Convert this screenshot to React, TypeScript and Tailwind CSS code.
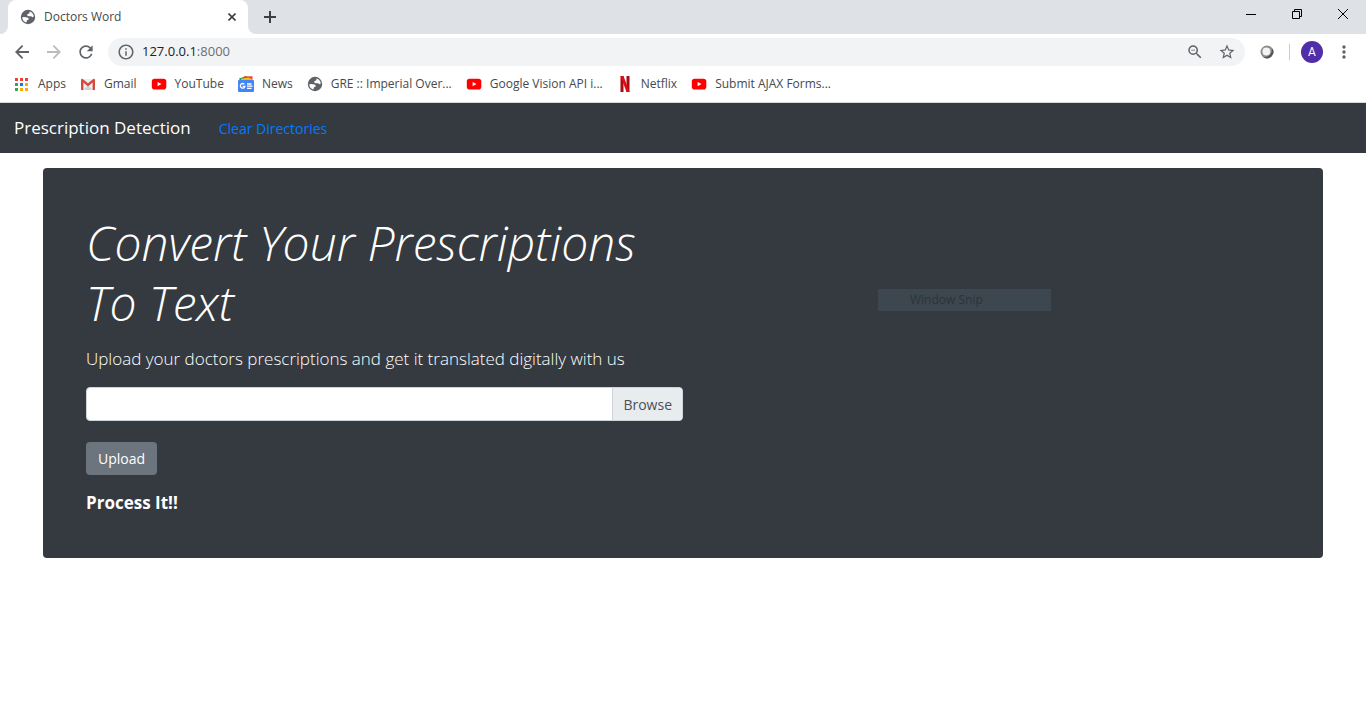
import type { ReactNode } from "react";
import {
  MdMoreVert,
  MdOutlineInfo,
  MdOutlineZoomOut,
  MdRefresh,
  MdStarBorder,
} from "react-icons/md";

function GlobeIcon() {
  return (
    <svg viewBox="0 0 16 16" className="size-4 shrink-0" aria-hidden="true">
      <circle cx="8" cy="8" r="7.2" fill="#5f6368" />
      <path
        fill="#fff"
        d="M2.300 8.200Q5 7.800 7.400 8.500 9 9.200 8.700 10.600L7 11.300 6.400 13.600A5.800 5.800 0 0 1 2.300 8.200zM9.600 2.400Q13.500 3.600 13.800 7.600L12.400 8.200 11.200 7.200 8.800 7.300 7.200 6.500 7.400 5 9.300 4.500z"
      />
    </svg>
  );
}

function ArrowIcon({ forward = false }: { forward?: boolean }) {
  return (
    <svg
      viewBox="0 0 14 14"
      className={forward ? "size-[14px] -scale-x-100" : "size-[14px]"}
      fill="none"
      stroke="currentColor"
      strokeWidth="1.8"
      aria-hidden="true"
    >
      <path d="M14 7H1.500M7.600.7 1.300 7l6.300 6.300" />
    </svg>
  );
}

function AppsIcon() {
  const colors = [
    "#ea4335", "#ea4335", "#ea4335",
    "#34a853", "#1a73e8", "#f9ab00",
    "#34a853", "#f9ab00", "#f9ab00",
  ];
  return (
    <svg viewBox="0 0 13 13" className="size-[13px] shrink-0" aria-hidden="true">
      {colors.map((color, i) => (
        <rect key={i} x={(i % 3) * 5} y={Math.floor(i / 3) * 5} width="3" height="3" fill={color} />
      ))}
    </svg>
  );
}

function GmailIcon() {
  return (
    <svg viewBox="0 0 16 16" className="size-4 shrink-0" aria-hidden="true">
      <path fill="#eceff1" d="M2 3h12v11H2z" />
      <path fill="#cfd3d6" d="M3.6 14 8 9.4 12.4 14z" />
      <path
        fill="#d6493c"
        d="M1 4q0-1.3 1.4-1.3L8 7.3l5.600-4.600Q15 2.700 15 4v10h-2.400V6.600L8 10.400 3.400 6.600V14H1z"
      />
    </svg>
  );
}

function YouTubeIcon() {
  return (
    <svg viewBox="0 0 16 16" className="size-4 shrink-0" aria-hidden="true">
      <rect x="0.8" y="2.700" width="14.500" height="10.800" rx="2.800" fill="#f00" />
      <path fill="#fff" d="M6.600 5.900v4.400L10.500 8.100z" />
    </svg>
  );
}

function NewsIcon() {
  return (
    <svg viewBox="0 0 16 16" className="size-4 shrink-0" aria-hidden="true">
      <path fill="#0f9d58" d="M1 2.500 8.500 0 11 6H2.500z" />
      <path fill="#ea4335" d="M6 .3h8.500V5H6z" />
      <path fill="#fbbc04" d="M3 2.800 10.500 1.500 14.500 3.500V6H3z" />
      <rect y="4" width="16" height="12" rx="1" fill="#4285f4" />
      <path
        fill="none"
        stroke="#fff"
        strokeWidth="1.300"
        d="M6.300 8.200A2.300 2.300 0 1 0 6.900 10.300H4.700M9 8h4.500M9 10.200h5.500M9 12.400h4.500"
      />
    </svg>
  );
}

function NetflixIcon() {
  return (
    <svg viewBox="0 0 16 16" className="size-4 shrink-0" aria-hidden="true">
      <path fill="#a50d14" d="M3.500 0h3v16l-3 0zM9.500 0h3v16h-3z" />
      <path fill="#e50914" d="M3.500 0h3l6 16h-3z" />
    </svg>
  );
}

function TabFoot({ flip = false }: { flip?: boolean }) {
  return (
    <svg
      viewBox="0 0 8 8"
      className={flip ? "size-2 -scale-x-100 self-end" : "size-2 self-end"}
      aria-hidden="true"
    >
      <path fill="#fff" d="M8 0V8H0A8 8 0 0 0 8 0z" />
    </svg>
  );
}

const bookmarks: { label: string; icon: ReactNode; gap: string }[] = [
  { label: "Apps", icon: <AppsIcon />, gap: "gap-[10px]" },
  { label: "Gmail", icon: <GmailIcon />, gap: "gap-2" },
  { label: "YouTube", icon: <YouTubeIcon />, gap: "gap-2" },
  { label: "News", icon: <NewsIcon />, gap: "gap-2" },
  { label: "GRE :: Imperial Over...", icon: <GlobeIcon />, gap: "gap-2" },
  { label: "Google Vision API i...", icon: <YouTubeIcon />, gap: "gap-2" },
  { label: "Netflix", icon: <NetflixIcon />, gap: "gap-2" },
  { label: "Submit AJAX Forms...", icon: <YouTubeIcon />, gap: "gap-2" },
];

function TabStrip() {
  return (
    <div className="flex h-[34px] bg-[#dee1e6]">
      <TabFoot />
      <div className="flex w-60 items-center gap-2 rounded-t-lg bg-white pr-2 pl-3">
        <GlobeIcon />
        <span className="flex-1 text-[12px] text-[#45494d]">Doctors Word</span>
        <button aria-label="Close tab" className="flex size-4 items-center justify-center text-[#3c4043]">
          <svg viewBox="0 0 8 8" className="size-2" aria-hidden="true">
            <path d="M.5.5l7 7M7.500.5l-7 7" stroke="currentColor" strokeWidth="1.600" />
          </svg>
        </button>
      </div>
      <TabFoot flip />
      <button aria-label="New tab" className="flex w-7 items-center justify-center text-[#3c4043]">
        <svg viewBox="0 0 12 12" className="size-3" aria-hidden="true">
          <path d="M6 0v12M0 6h12" stroke="currentColor" strokeWidth="2" />
        </svg>
      </button>
      <div className="ml-auto flex h-7 text-black">
        <button aria-label="Minimize" className="flex w-[46px] items-center justify-center">
          <svg viewBox="0 0 10 10" className="size-[10px]" aria-hidden="true">
            <path d="M0 5.500h10" stroke="currentColor" />
          </svg>
        </button>
        <button aria-label="Restore" className="flex w-[46px] items-center justify-center">
          <svg viewBox="0 0 10 10" className="size-[10px]" fill="none" stroke="currentColor" aria-hidden="true">
            <path d="M.5 2.500h7v7h-7zM2.500 2.500v-2h7v7h-2" />
          </svg>
        </button>
        <button aria-label="Close window" className="flex w-[46px] items-center justify-center">
          <svg viewBox="0 0 10 10" className="size-[10px]" stroke="currentColor" aria-hidden="true">
            <path d="M0 0 10 10M10 0 0 10" />
          </svg>
        </button>
      </div>
    </div>
  );
}

function Toolbar() {
  return (
    <div className="flex h-9 items-center bg-white px-3 text-[#5f6368]">
      <div className="flex w-24 gap-3">
        <button aria-label="Back" className="flex size-5 items-center justify-center">
          <ArrowIcon />
        </button>
        <button aria-label="Forward" className="flex size-5 items-center justify-center text-[#babcbe]">
          <ArrowIcon forward />
        </button>
        <button aria-label="Reload" className="flex size-5 items-center justify-center">
          <MdRefresh className="size-5" />
        </button>
      </div>
      <div className="flex h-7 flex-1 items-center rounded-full bg-[#f1f3f4] px-[9px]">
        <MdOutlineInfo className="size-[18px] shrink-0" />
        <span className="ml-[7px] flex-1 text-[13px] text-[#6b6f73]">
          <span className="text-[#202124]">127.0.0.1</span>:8000
        </span>
        <button aria-label="Zoom" className="mr-[14px]">
          <MdOutlineZoomOut className="size-[18px]" />
        </button>
        <button aria-label="Bookmark this tab">
          <MdStarBorder className="size-[18px]" />
        </button>
      </div>
      <button aria-label="Extension" className="mx-[14px]">
        <svg viewBox="0 0 16 16" className="size-4" aria-hidden="true">
          <circle cx="8" cy="8" r="6.500" fill="#8c8c8c" />
          <path d="M13.200 4.200A6.500 6.500 0 0 1 4 13.100Q9 13 11.300 10.500 13 8 13.200 4.200z" fill="#555" />
          <circle cx="7.400" cy="7.400" r="4" fill="#f4f4f4" />
        </svg>
      </button>
      <span className="h-4 w-px bg-[#c8cbcf]" />
      <button
        aria-label="Profile"
        className="ml-[11px] flex size-[22px] items-center justify-center rounded-full bg-[#512da8] font-[Roboto] text-[12px] text-white"
      >
        A
      </button>
      <button aria-label="Menu" className="ml-[11px]">
        <MdMoreVert className="size-5" />
      </button>
    </div>
  );
}

function BookmarksBar() {
  return (
    <nav
      aria-label="Bookmarks"
      className="flex h-[33px] items-center gap-[14px] border-b border-[#d5d7da] bg-white pb-1 pl-[15px] text-[12px] text-[#45494d]"
    >
      {bookmarks.map(({ label, icon, gap }) => (
        <a key={label} href="#" className={`flex items-center whitespace-nowrap ${gap}`}>
          {icon}
          {label}
        </a>
      ))}
    </nav>
  );
}

export default function App() {
  return (
    <div className="min-h-screen bg-white font-['Open_Sans','Noto_Sans',sans-serif]">
      <header>
        <TabStrip />
        <Toolbar />
        <BookmarksBar />
      </header>
      <nav aria-label="Main" className="flex h-[50px] items-center gap-7 bg-[#343a40] px-[14px]">
        <a href="#" className="text-[17px] text-white">
          Prescription Detection
        </a>
        <a href="#" className="text-[14px] text-[#007bff]">
          Clear Directories
        </a>
      </nav>
      <main className="relative mx-[43px] mt-[15px] rounded bg-[#343a40] px-[43px] pt-[45px] pb-[42px] text-white">
        <div className="w-1/2">
          <h1 className="mb-3 text-[48px] leading-[60px] font-light italic">
            Convert Your Prescriptions To Text
          </h1>
          <p className="mb-[15px] text-[17px] leading-[27px] font-light">
            Upload your doctors prescriptions and get it translated digitally with us
          </p>
          <form onSubmit={(event) => event.preventDefault()}>
            <div className="relative flex h-[34px] overflow-hidden rounded border border-[#ced4da] bg-white">
              <input
                id="prescription"
                type="file"
                className="absolute inset-0 h-full w-full cursor-pointer opacity-0"
              />
              <label
                htmlFor="prescription"
                className="ml-auto flex items-center border-l border-[#ced4da] bg-[#e9ecef] px-[10px] text-[14px] text-[#495057]"
              >
                Browse
              </label>
            </div>
            <button className="mt-[21px] block h-[33px] rounded bg-[#6c757d] px-3 text-[14px] text-white">
              Upload
            </button>
          </form>
          <a href="#" className="mt-[14px] block text-[17px] leading-[27px] font-bold">
            Process It!!
          </a>
        </div>
        <div className="absolute top-[121px] left-[835px] flex h-[22px] w-[173px] items-center bg-[#3d474f] pl-8 text-[12px] text-[#2c333a]">
          Window Snip
        </div>
      </main>
    </div>
  );
}
